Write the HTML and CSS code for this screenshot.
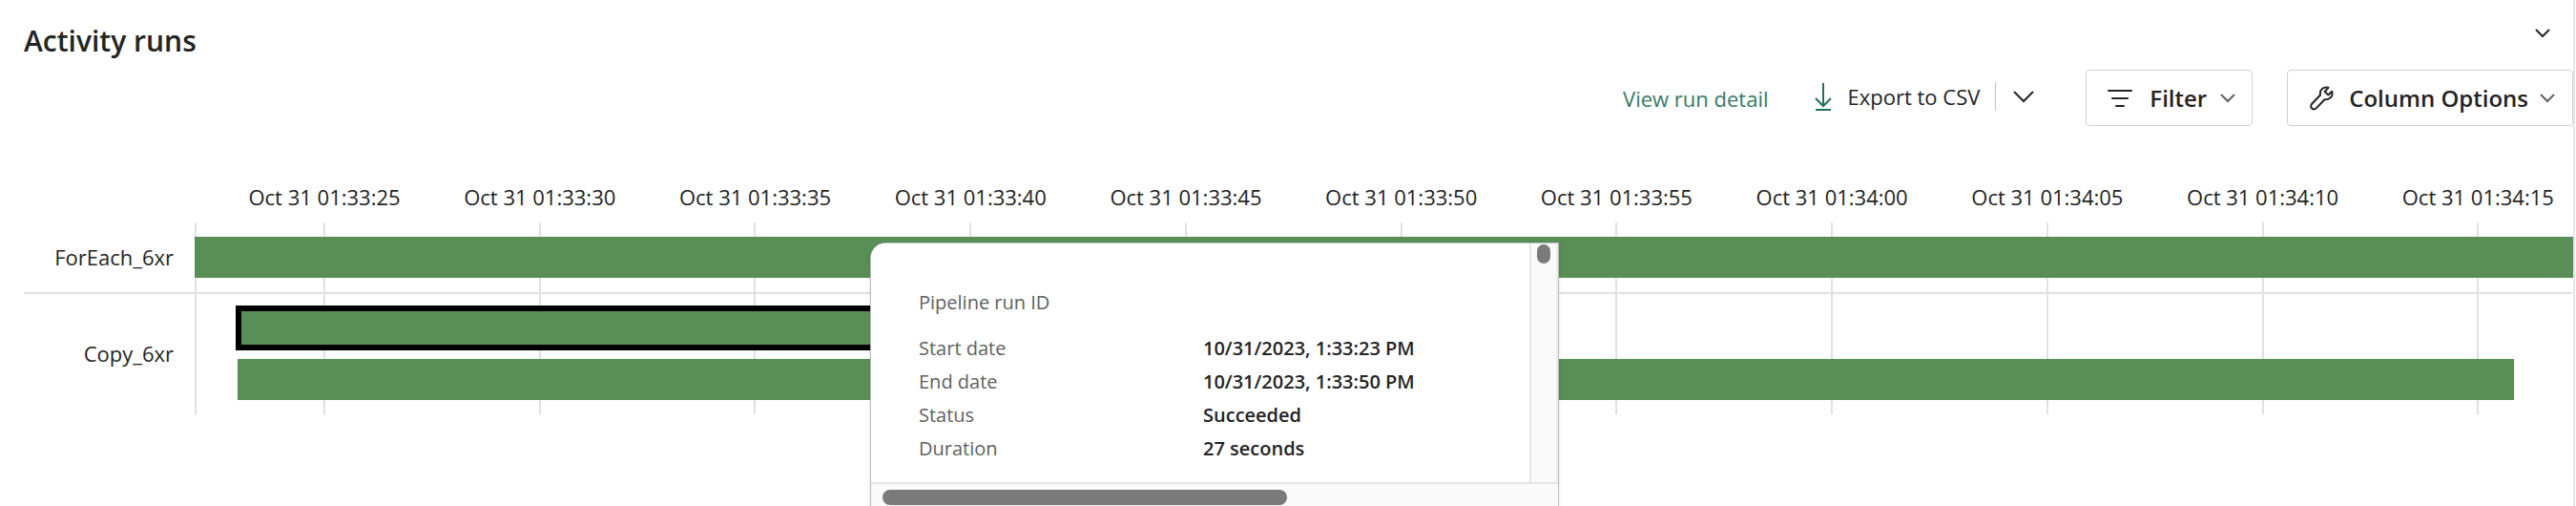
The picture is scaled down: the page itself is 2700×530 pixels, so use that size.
FILE: index.html
```html
<!DOCTYPE html>
<html lang="en">
<head>
<meta charset="utf-8">
<title>Activity runs</title>
<link rel="stylesheet" href="styles.css">
</head>
<body>
<main class="panel">
  <header class="panel-header">
    <h1 class="title">Activity runs</h1>
    <button class="collapse" type="button" aria-label="Collapse section">
      <svg class="chevron" width="16" height="10" viewBox="0 0 16 10"><path d="M1 1l7 7 7-7"/></svg>
    </button>
  </header>

  <div class="toolbar">
    <a class="detail-link" href="#detail">View run detail</a>
    <div class="export">
      <button class="export-button" type="button">
        <svg class="download" width="18" height="30" viewBox="0 0 18 30"><path d="M9 1v24M1 17l8 8 8-8M1 29h16"/></svg>
        Export to CSV
      </button>
      <button class="export-more" type="button" aria-label="More export options">
        <svg class="chevron" width="22" height="14" viewBox="0 0 22 14"><path d="M1 2l10 10 10-10"/></svg>
      </button>
    </div>
    <button class="boxed filter" type="button">
      <svg class="lines" width="26" height="20" viewBox="0 0 26 20"><path d="M1 2h24M5 10h16M9 18h8"/></svg>
      <span class="boxed-label">Filter</span>
      <svg class="chevron muted" width="16" height="10" viewBox="0 0 16 10"><path d="M1 1l7 7 7-7"/></svg>
    </button>
    <button class="boxed columns" type="button">
      <svg class="wrench" width="25" height="26" viewBox="0 0 25 26"><path d="M19.500 1.800C14.500 .2 10 4 11 9.500L2.200 18.800c-1.400 1.400-1.400 3.400 0 4.700s3.200 1.200 4.500-.1L15.500 14.200c5.200 1 9.300-3.500 7.700-8.500l-4 3.700-3.500-3.400z"/></svg>
      <span class="boxed-label">Column Options</span>
      <svg class="chevron muted" width="16" height="10" viewBox="0 0 16 10"><path d="M1 1l7 7 7-7"/></svg>
    </button>
  </div>

  <section class="chart" aria-label="Activity timeline">
    <div class="axis">
      <span class="tick">Oct 31 01:33:25</span>
      <span class="tick">Oct 31 01:33:30</span>
      <span class="tick">Oct 31 01:33:35</span>
      <span class="tick">Oct 31 01:33:40</span>
      <span class="tick">Oct 31 01:33:45</span>
      <span class="tick">Oct 31 01:33:50</span>
      <span class="tick">Oct 31 01:33:55</span>
      <span class="tick">Oct 31 01:34:00</span>
      <span class="tick">Oct 31 01:34:05</span>
      <span class="tick">Oct 31 01:34:10</span>
      <span class="tick">Oct 31 01:34:15</span>
    </div>
    <div class="gridlines">
      <div class="lines-row">
        <i class="line"></i><i class="line"></i><i class="line"></i><i class="line"></i><i class="line"></i><i class="line"></i><i class="line"></i><i class="line"></i><i class="line"></i><i class="line"></i><i class="line"></i>
      </div>
    </div>
    <div class="row row-first">
      <div class="row-label">ForEach_6xr</div>
      <div class="bars">
        <div class="bar" style="width: 100%"></div>
      </div>
    </div>
    <div class="row row-second">
      <div class="row-label">Copy_6xr</div>
      <div class="bars">
        <div class="bar selected" style="margin-left: 1.72%; width: 49%"></div>
        <div class="bar" style="margin-left: 1.8%; width: 95.7%"></div>
      </div>
    </div>
  </section>

  <aside class="popup" role="tooltip">
    <div class="popup-body">
      <dl class="facts">
        <dt class="wide">Pipeline run ID</dt>
        <dt>Start date</dt><dd>10/31/2023, 1:33:23 PM</dd>
        <dt>End date</dt><dd>10/31/2023, 1:33:50 PM</dd>
        <dt>Status</dt><dd>Succeeded</dd>
        <dt>Duration</dt><dd>27 seconds</dd>
      </dl>
    </div>
    <div class="track-y"><div class="thumb-y"></div></div>
    <div class="track-x"><div class="thumb-x"></div></div>
  </aside>
</main>
</body>
</html>
```
FILE: styles.css
```css
* {
  box-sizing: border-box;
}

body {
  margin: 0;
  background: #fff;
  color: #242424;
  font-family: "Segoe UI", "Open Sans", "Noto Sans", sans-serif;
  font-size: 22px;
  line-height: 32px;
}

button {
  margin: 0;
  padding: 0;
  border: 0;
  background: none;
  color: inherit;
  font: inherit;
}

svg {
  flex: none;
  fill: none;
  stroke: currentColor;
  stroke-width: 2;
}

.panel {
  position: relative;
  min-height: 100vh;
  margin-right: 1px;
  border-right: 2px solid #e6e6e6;
  overflow: hidden;
}

.panel-header {
  display: flex;
  justify-content: space-between;
  align-items: flex-start;
  padding: 23px 24px 0 25px;
}

.title {
  margin: 0;
  font-size: 30px;
  line-height: 40px;
  font-weight: 600;
}

.collapse {
  display: flex;
  padding: 7px 0;
}

.toolbar {
  display: flex;
  justify-content: flex-end;
  align-items: center;
  margin-top: 10px;
}

.detail-link {
  margin-right: 48px;
  color: #35796a;
  text-decoration: none;
}

.export {
  display: flex;
  align-items: center;
  margin-right: 54px;
  padding-bottom: 3px;
}

.export-button {
  display: flex;
  align-items: center;
  gap: 17px;
  padding-right: 16px;
}

.download {
  color: #20705c;
}

.export-more {
  display: flex;
  align-items: center;
  height: 30px;
  padding-left: 18px;
  border-left: 1px solid #c4c4c4;
}

.boxed {
  display: flex;
  align-items: center;
  height: 59px;
  border: 1px solid #d1d1d1;
  border-radius: 4px;
  font-weight: 600;
  font-size: 24px;
}

.filter {
  gap: 2px;
  margin-right: 36px;
  padding: 0 17px 0 22px;
}

.columns {
  padding: 0 18px 0 23px;
}

.boxed-label {
  margin: 0 12px 0 16px;
}

.lines {
  stroke-linecap: round;
}

.wrench {
  stroke-linejoin: round;
}

.muted {
  color: #616161;
}

.chart {
  display: grid;
  grid-template-columns: 204px 1fr;
  grid-template-rows: 43px 75px 126px;
  margin-top: 58px;
}

.axis,
.lines-row {
  display: grid;
  grid-template-columns: repeat(11, 1fr);
  width: 99.6%;
  margin-left: 0.93%;
}

.axis {
  grid-area: 1 / 2;
}

.tick {
  text-align: center;
  white-space: nowrap;
}

.gridlines {
  grid-area: 2 / 2 / 4 / 3;
  display: grid;
  box-shadow: inset 2px 0 #e1e1e1;
}

.line {
  justify-self: center;
  width: 2px;
  background: #e1e1e1;
}

.row {
  display: grid;
  align-items: center;
  z-index: 1;
}

.row-first {
  grid-area: 2 / 1 / 3 / 3;
  grid-template-columns: 179px 1fr;
  margin: 0 1px 0 25px;
  border-bottom: 2px solid #e1e1e1;
}

.row-first .bars {
  margin-right: -1px;
}

.row-second {
  grid-area: 3 / 1 / 4 / 3;
  grid-template-columns: 204px 1fr;
}

.row-label {
  padding: 0 22px 2px 0;
  text-align: right;
}

.bars {
  display: grid;
  gap: 9px;
}

.row-second .bars {
  padding-bottom: 3px;
}

.bar {
  height: 43px;
  background: #598e56;
}

.selected {
  height: 47px;
  border: 6px solid #000;
}

.popup {
  position: absolute;
  z-index: 2;
  top: 254px;
  left: 912px;
  display: grid;
  grid-template-columns: 690px 30px;
  grid-template-rows: 250px 30px;
  border: 1px solid #bdbdbd;
  border-radius: 16px 0 0 0;
  background: #fafafa;
  box-shadow: 0 2px 4px rgba(0, 0, 0, 0.12);
}

.popup-body {
  padding: 44px 50px 0;
  border-radius: 15px 0 0 0;
  background: #fff;
}

.facts {
  display: grid;
  grid-template-columns: 298px 1fr;
  margin: 0;
  font-size: 20px;
  line-height: 35px;
}

.facts dt {
  color: #616161;
}

.facts .wide {
  grid-column: 1 / 3;
  margin-bottom: 13px;
}

.facts dd {
  margin: 0;
  font-weight: 600;
}

.track-y {
  padding: 1px 6px;
  border-left: 2px solid #e6e6e6;
  border-right: 2px solid #ededed;
}

.thumb-y {
  width: 14px;
  height: 20px;
  border-radius: 7px;
  background: #7a7a7a;
}

.track-x {
  grid-column: 1 / 3;
  padding: 6px 12px;
  border-top: 2px solid #e6e6e6;
}

.thumb-x {
  width: 424px;
  height: 16px;
  border-radius: 8px;
  background: #7a7a7a;
}
```
